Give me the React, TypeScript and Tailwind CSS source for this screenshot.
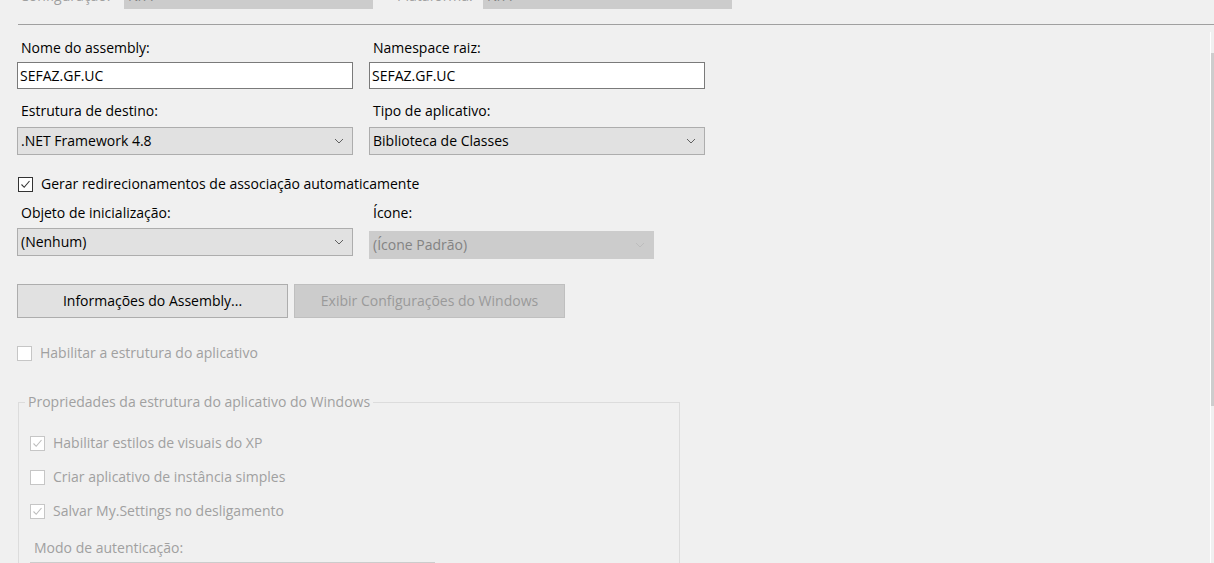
import React from 'react';

const font = { fontFamily: '"Open Sans", "Noto Sans", sans-serif' };

const Chevron = ({ disabled = false }: { disabled?: boolean }) => (
  <svg width="10" height="6" viewBox="0 0 10 6" className="shrink-0">
    <polyline points="1,1 5,5 9,1" fill="none" stroke={disabled ? '#bdbdbd' : '#606060'} strokeWidth="1" />
  </svg>
);

const Check = ({ checked, disabled = false }: { checked: boolean; disabled?: boolean }) => (
  <span
    className={`flex items-center justify-center w-[15px] h-[15px] shrink-0 border bg-white ${
      disabled ? 'border-[#c6c6c6]' : 'border-[#333333]'
    }`}
  >
    {checked && (
      <svg width="11" height="11" viewBox="0 0 11 11">
        <polyline points="1.5,5.5 4.2,8.3 9.5,2" fill="none" stroke={disabled ? '#bdbdbd' : '#333333'} strokeWidth="1.1" />
      </svg>
    )}
  </span>
);

const Select = ({ value, disabled = false, w = 'w-[336px]' }: { value: string; disabled?: boolean; w?: string }) => (
  <div
    className={`${w} h-[28px] flex items-center justify-between pl-[3px] pr-[8px] border ${
      disabled ? 'bg-[#cccccc] border-[#cccccc] text-[#838383]' : 'bg-[#e1e1e1] border-[#adadad] text-black'
    }`}
  >
    <span>{value}</span>
    <Chevron disabled={disabled} />
  </div>
);

const Input = ({ value }: { value: string }) => (
  <div className="w-[336px] h-[27px] flex items-center pl-[2px] bg-white border border-[#7a7a7a]">{value}</div>
);

const CheckRow = ({ label, checked, disabled = false }: { label: string; checked: boolean; disabled?: boolean }) => (
  <div className={`flex items-center gap-[8px] ${disabled ? 'text-[#a0a0a0]' : 'text-black'}`}>
    <Check checked={checked} disabled={disabled} />
    <span>{label}</span>
  </div>
);

export default function App() {
  return (
    <div style={font} className="w-[1214px] h-[563px] overflow-hidden bg-[#f0f0f0] text-[14px] leading-[20px] flex flex-col">
      {/* header row, scrolled mostly out of view */}
      <div className="flex items-center -mt-[17px] pl-[20px] h-[26px] shrink-0">
        <span className="w-[104px] text-[#a0a0a0]">Configuração:</span>
        <div className="w-[249px] h-[26px] bg-[#cccccc] pl-[4px] flex items-center text-[#838383]">N/A</div>
        <span className="ml-[24px] w-[86px] text-[#a0a0a0]">Plataforma:</span>
        <div className="w-[249px] h-[26px] bg-[#cccccc] pl-[4px] flex items-center text-[#838383]">N/A</div>
      </div>
      <div className="ml-[18px] mt-[15px] h-px bg-[#a0a0a0] shrink-0" />

      <div className="flex flex-1 min-h-0">
        <div className="flex-1 pl-[17px] pt-[13px] flex flex-col">
          <div className="flex gap-[16px]">
            <div className="flex flex-col">
              <span className="pl-[4px] h-[24px]">Nome do assembly:</span>
              <Input value="SEFAZ.GF.UC" />
            </div>
            <div className="flex flex-col">
              <span className="pl-[4px] h-[24px]">Namespace raiz:</span>
              <Input value="SEFAZ.GF.UC" />
            </div>
          </div>

          <div className="flex gap-[16px] mt-[12px]">
            <div className="flex flex-col">
              <span className="pl-[4px] h-[26px]">Estrutura de destino:</span>
              <Select value=".NET Framework 4.8" />
            </div>
            <div className="flex flex-col">
              <span className="pl-[4px] h-[26px]">Tipo de aplicativo:</span>
              <Select value="Biblioteca de Classes" />
            </div>
          </div>

          <div className="mt-[19px] pl-[1px]">
            <CheckRow label="Gerar redirecionamentos de associação automaticamente" checked />
          </div>

          <div className="flex gap-[16px] mt-[9px]">
            <div className="flex flex-col">
              <span className="pl-[4px] h-[25px]">Objeto de inicialização:</span>
              <Select value="(Nenhum)" />
            </div>
            <div className="flex flex-col">
              <span className="pl-[4px] h-[28px]">Ícone:</span>
              <Select value="(Ícone Padrão)" disabled w="w-[285px]" />
            </div>
          </div>

          <div className="flex gap-[6px] mt-[25px]">
            <div className="w-[271px] h-[34px] flex items-center justify-center bg-[#e1e1e1] border border-[#adadad]">
              Informações do Assembly...
            </div>
            <div className="w-[271px] h-[34px] flex items-center justify-center bg-[#cccccc] border border-[#bfbfbf] text-[#9a9a9a]">
              Exibir Configurações do Windows
            </div>
          </div>

          <div className="mt-[25px]">
            <CheckRow label="Habilitar a estrutura do aplicativo" checked={false} disabled />
          </div>

          <div className="relative mt-[39px] ml-[1px] w-[662px] border border-[#dcdcdc] border-b-0 pt-[30px] pl-[11px] flex flex-col gap-[14px] h-[200px]">
            <span className="absolute -top-[9px] left-[6px] px-[3px] bg-[#f0f0f0] text-[#a0a0a0] leading-[16px]">
              Propriedades da estrutura do aplicativo do Windows
            </span>
            <CheckRow label="Habilitar estilos de visuais do XP" checked disabled />
            <CheckRow label="Criar aplicativo de instância simples" checked={false} disabled />
            <CheckRow label="Salvar My.Settings no desligamento" checked disabled />
            <div className="flex flex-col mt-[3px]">
              <span className="pl-[4px] text-[#a0a0a0] h-[24px]">Modo de autenticação:</span>
              <div className="w-[405px] h-[28px] bg-[#cccccc] border border-[#cccccc]" />
            </div>
          </div>
        </div>

        {/* scrollbar */}
        <div className="w-[4px] mt-[7px] pt-[21px] border-l border-white flex flex-col">
          <div className="h-[353px] bg-[#cdcdcd]" />
        </div>
      </div>
    </div>
  );
}
